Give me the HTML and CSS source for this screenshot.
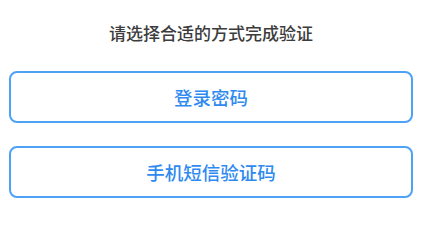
FILE: index.html
```html
<!DOCTYPE html>
<html lang="zh-CN">
<head>
  <meta charset="UTF-8" />
  <meta name="viewport" content="width=device-width, initial-scale=1.0"/>
  <title>选择验证方式</title>
  <link rel="stylesheet" href="styles.css">
</head>
<body>
  <div class="verify">
    <p class="verify-title">请选择合适的方式完成验证</p>
    <button type="button" class="option-btn">登录密码</button>
    <button type="button" class="option-btn">手机短信验证码</button>
  </div>
</body>
</html>
```

FILE: styles.css
```css
:root {
  --primary: #2f8af0;
  --border: #4ea2f6;
  --text-primary: #3c3c3c;
}

body {
  margin: 0;
  background: #ffffff;
  font-family: "Noto Sans CJK SC", "Noto Sans", sans-serif;
}

.verify {
  display: flex;
  flex-direction: column;
  gap: 23px;
  padding: 20px 14px 0 9px;
}

.verify-title {
  margin: 0 0 2px;
  text-align: center;
  font-size: 17px;
  font-weight: 500;
  line-height: 26px;
  color: var(--text-primary);
}

.option-btn {
  width: 100%;
  height: 52px;
  background: #ffffff;
  border: 2px solid var(--border);
  border-radius: 8px;
  color: var(--primary);
  font-family: inherit;
  font-size: 18.5px;
  font-weight: 500;
  cursor: pointer;
}
```
